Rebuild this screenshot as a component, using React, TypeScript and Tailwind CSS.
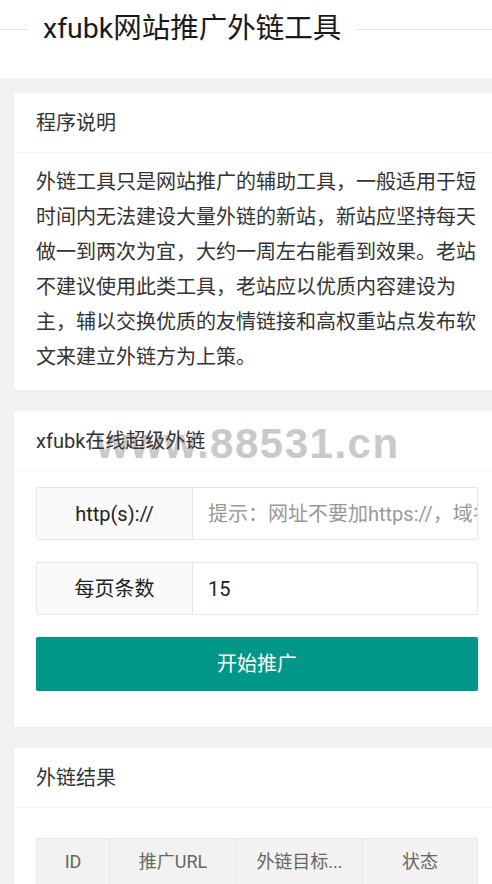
import React from 'react';

const CardHeader: React.FC<{ children: React.ReactNode }> = ({ children }) => (
  <div className="relative flex h-[60px] items-center border-b border-[#f6f6f6] px-[22px] text-[20px] text-[#333]">
    {children}
  </div>
);

const FormRow: React.FC<{ label: string; placeholder?: string; value?: string }> = ({ label, placeholder, value }) => (
  <div className="flex h-[53px] overflow-hidden rounded-[2px] border border-[#e6e6e6]">
    <div className="flex w-[156px] shrink-0 items-center justify-center border-r border-[#e6e6e6] bg-[#fafafa] text-[20px] text-[#222]">
      {label}
    </div>
    <input
      className="min-w-0 flex-1 bg-white pl-[15px] text-[20px] text-[#222] outline-none placeholder:text-[#999]"
      placeholder={placeholder}
      defaultValue={value}
    />
  </div>
);

export default function App() {
  return (
    <div className="min-h-screen w-full overflow-hidden bg-[#f2f2f2] font-['Roboto','Noto_Sans_CJK_SC',sans-serif] text-[#333]">
      {/* 顶部标题 */}
      <header className="h-[78px] bg-white pt-[13px]">
        <div className="flex items-center">
          <div className="h-px w-[28px] bg-[#e2e2e2]" />
          <h1 className="px-[15px] text-[28.5px] font-normal leading-[32px] text-[#1a1a1a]">xfubk网站推广外链工具</h1>
          <div className="h-px flex-1 bg-[#e2e2e2]" />
        </div>
      </header>

      <div className="flex flex-col gap-[21px] pl-[14px] pt-[15px] pb-[20px]">
        {/* 程序说明 */}
        <section className="mr-[-8px] rounded-[2px] bg-white shadow-[0_1px_2px_rgba(0,0,0,0.04)]">
          <CardHeader>程序说明</CardHeader>
          <div className="px-[22px] pt-[12px] pb-[15px] text-[20px] leading-[35px] text-[#333]">
            外链工具只是网站推广的辅助工具，一般适用于短时间内无法建设大量外链的新站，新站应坚持每天做一到两次为宜，大约一周左右能看到效果。老站不建议使用此类工具，老站应以优质内容建设为主，辅以交换优质的友情链接和高权重站点发布软文来建立外链方为上策。
          </div>
        </section>

        {/* 在线超级外链 */}
        <section className="mr-[-8px] rounded-[2px] bg-white shadow-[0_1px_2px_rgba(0,0,0,0.04)]">
          <CardHeader>
            <span className="absolute left-[82px] top-[12px] whitespace-nowrap font-['Liberation_Sans',Arial,sans-serif] text-[42px] font-bold leading-[42px] tracking-[1.5px] text-[#c9c9c9]">
              www.88531.cn
            </span>
            <span className="relative">xfubk在线超级外链</span>
          </CardHeader>
          <div className="flex flex-col gap-[22px] px-[22px] pt-[16px] pb-[36px]">
            <FormRow label="http(s)://" placeholder="提示：网址不要加https://，域名后面不要加/" />
            <FormRow label="每页条数" value="15" />
            <button className="h-[54px] w-full rounded-[2px] bg-[#009688] text-[20px] text-white">开始推广</button>
          </div>
        </section>

        {/* 外链结果 */}
        <section className="mr-[-8px] rounded-[2px] bg-white shadow-[0_1px_2px_rgba(0,0,0,0.04)]">
          <CardHeader>外链结果</CardHeader>
          <div className="px-[22px] pt-[30px] pb-[20px]">
            <table className="w-full border-collapse text-[18px] text-[#666]">
              <thead>
                <tr className="h-[46px] bg-[#f2f2f2]">
                  <th className="w-[73px] border border-[#e6e6e6] font-normal">ID</th>
                  <th className="w-[127px] border border-[#e6e6e6] font-normal">推广URL</th>
                  <th className="w-[126px] border border-[#e6e6e6] font-normal">外链目标...</th>
                  <th className="border border-[#e6e6e6] font-normal">状态</th>
                </tr>
              </thead>
              <tbody>
                <tr className="h-[46px]">
                  <td colSpan={4} className="border border-[#e6e6e6] text-center text-[#999]">暂无数据</td>
                </tr>
              </tbody>
            </table>
          </div>
        </section>
      </div>
    </div>
  );
}
